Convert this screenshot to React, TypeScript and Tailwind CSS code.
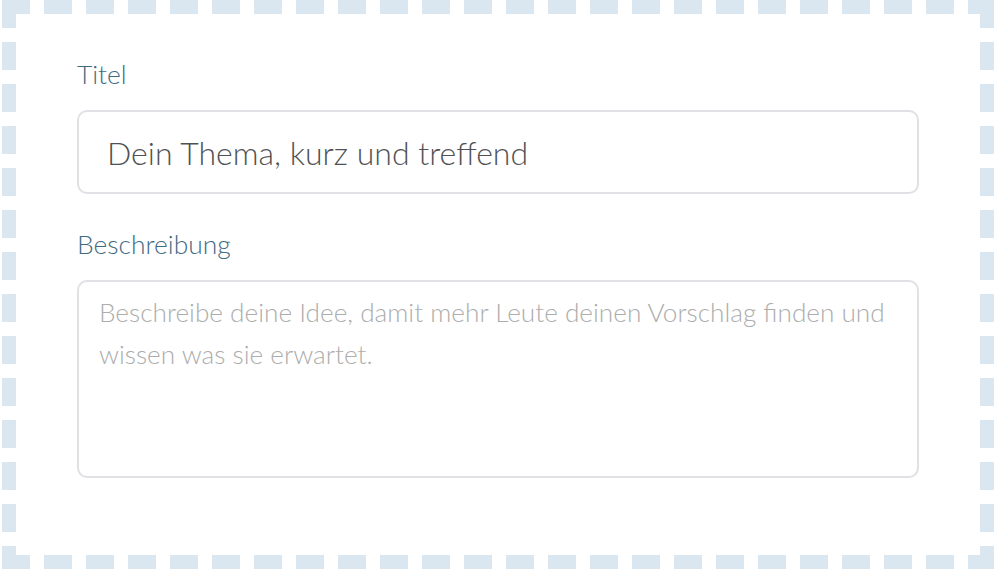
export default function App() {
  return (
    <div className="w-[996px] h-[570px] bg-white font-['Lato',sans-serif]">
      {/* dashed frame: 28px dashes, 14px gaps, drawn as gradients so the dash length matches */}
      <div className="ml-[2px] w-[992px] h-[569px] bg-no-repeat bg-[repeating-linear-gradient(90deg,#dbe7f0_0_28px,transparent_28px_42px),repeating-linear-gradient(90deg,#dbe7f0_0_28px,transparent_28px_42px),repeating-linear-gradient(180deg,#dbe7f0_0_28px,transparent_28px_42px),repeating-linear-gradient(180deg,#dbe7f0_0_28px,transparent_28px_42px)] bg-[length:100%_14px,100%_14px,14px_100%,14px_100%] bg-[position:left_top,left_bottom,left_top,right_top] pl-[75px] pr-[75px] pt-[59px]">
        <label htmlFor="title" className="block text-[26.4px] leading-[31px] font-light text-[#3f6b82]">
          Titel
        </label>
        <input
          id="title"
          type="text"
          defaultValue="Dein Thema, kurz und treffend"
          className="mt-[20px] block w-full h-[84px] rounded-[10px] border-2 border-[#e1e1e5] bg-white px-[28px] text-[32px] font-light text-[#4f5254] outline-none"
        />

        <label htmlFor="description" className="mt-[35px] block text-[26.4px] leading-[31px] font-light text-[#3f6b82]">
          Beschreibung
        </label>
        <textarea
          id="description"
          placeholder="Beschreibe deine Idee, damit mehr Leute deinen Vorschlag finden und wissen was sie erwartet."
          className="mt-[20px] block w-full h-[198px] resize-none rounded-[10px] border-2 border-[#e1e1e5] bg-white px-[20px] pt-[9px] text-[26.2px] leading-[42px] font-light text-[#4f5254] placeholder:text-[#adadad] outline-none"
        />
      </div>
    </div>
  );
}
